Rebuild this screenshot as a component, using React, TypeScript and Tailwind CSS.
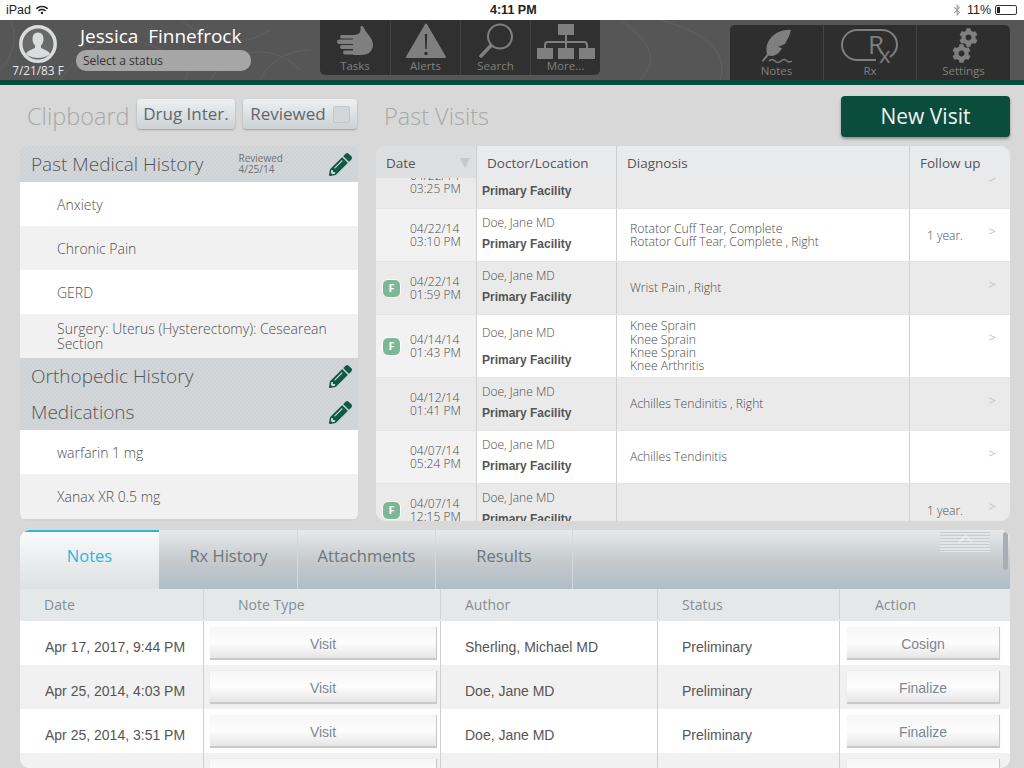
import { FaBluetoothB, FaCog, FaPencilAlt, FaWifi } from "react-icons/fa";
import { ReactNode } from "react";

const ui = "font-['Open_Sans',sans-serif]";
const arial = "font-['Liberation_Sans',Arial,sans-serif]";
const hatch =
  "bg-[repeating-linear-gradient(135deg,#d4d8db_0px,#d4d8db_1.414px,#cdd1d4_1.414px,#cdd1d4_2.828px)]";

interface Visit {
  date: string;
  time: string;
  tall?: boolean;
  flag?: boolean;
  diagnosis: string[];
  followUp?: string;
}

const visits: Visit[] = [
  { date: "04/22/14", time: "03:25 PM", diagnosis: [] },
  {
    date: "04/22/14",
    time: "03:10 PM",
    diagnosis: ["Rotator Cuff Tear, Complete", "Rotator Cuff Tear, Complete , Right"],
    followUp: "1 year.",
  },
  { date: "04/22/14", time: "01:59 PM", flag: true, diagnosis: ["Wrist Pain , Right"] },
  {
    date: "04/14/14",
    time: "01:43 PM",
    flag: true,
    tall: true,
    diagnosis: ["Knee Sprain", "Knee Sprain", "Knee Sprain", "Knee Arthritis"],
  },
  { date: "04/12/14", time: "01:41 PM", diagnosis: ["Achilles Tendinitis , Right"] },
  { date: "04/07/14", time: "05:24 PM", diagnosis: ["Achilles Tendinitis"] },
  { date: "04/07/14", time: "12:15 PM", flag: true, diagnosis: [], followUp: "1 year." },
];

const notes = [
  { date: "Apr 17, 2017, 9:44 PM", author: "Sherling, Michael MD", action: "Cosign" },
  { date: "Apr 25, 2014, 4:03 PM", author: "Doe, Jane MD", action: "Finalize" },
  { date: "Apr 25, 2014, 3:51 PM", author: "Doe, Jane MD", action: "Finalize" },
  { date: "", author: "", action: "" },
];

function HandIcon() {
  return (
    <svg width="36" height="29" viewBox="0 0 36 29" fill="#7f7f7f">
      <rect x="3" y="9" width="20" height="3.6" rx="1.8" />
      <rect x="0" y="13.4" width="22" height="4.6" rx="2.3" />
      <rect x="3" y="19" width="20" height="4" rx="2" />
      <rect x="6" y="24.4" width="20" height="4" rx="2" />
      <path d="M16 9c4 0 6-1 7-3 1-2 0-5 1-6 2-1 3 2 4 4 2 4 8 8 8 15 0 6-5 10-11 10h-9z" />
    </svg>
  );
}

function AlertIcon() {
  return (
    <svg width="40" height="35" viewBox="0 0 40 35">
      <path d="M20 1.5L39 34H1z" fill="#7f7f7f" stroke="#7f7f7f" strokeWidth="2" strokeLinejoin="round" />
      <path d="M18.8 11h2.4l-.5 15h-1.4z" fill="#303030" />
      <circle cx="20" cy="30.5" r="1.8" fill="#303030" />
    </svg>
  );
}

function SearchIcon() {
  return (
    <svg width="34" height="35" viewBox="0 0 34 35" fill="none" stroke="#7f7f7f">
      <circle cx="21" cy="13.5" r="12" strokeWidth="2" />
      <path d="M11.5 23L2 33" strokeWidth="3.5" strokeLinecap="round" />
    </svg>
  );
}

function OrgIcon() {
  return (
    <svg width="58" height="35" viewBox="0 0 58 35" className="translate-y-[1px]">
      <g fill="#7f7f7f">
        <rect x="21" y="0" width="16" height="11" />
        <rect x="0" y="24" width="16" height="11" />
        <rect x="21" y="24" width="16" height="11" />
        <rect x="42" y="24" width="16" height="11" />
      </g>
      <path d="M29 11v13M8 24v-3a3 3 0 0 1 3-3h36a3 3 0 0 1 3 3v3" fill="none" stroke="#7f7f7f" strokeWidth="2" />
    </svg>
  );
}

function QuillIcon() {
  return (
    <svg width="32" height="34" viewBox="0 0 32 34">
      <path
        d="M30 1C24 0 14 3 9 10 5 15 5 21 6 25L1 31.5 2 33l5.5-6.5c5 1.500 10.500-1 13.500-7.500l-4-1 7-3c2-4 5-9 6-14z"
        fill="#7f7f7f"
      />
      <path d="M8 32c2-2 4-2 6 0s4 2 6 0 4-2 6 0 3 1 5 0" fill="none" stroke="#7f7f7f" strokeWidth="1.3" />
    </svg>
  );
}

function RxIcon() {
  return (
    <svg width="58" height="34" viewBox="0 0 58 34" fill="none" overflow="visible">
      <path
        d="M35 31H16a15 15 0 0 1 0-30h25c9 0 15 7 15 15 0 5-3 9-7 12"
        stroke="#7f7f7f"
        strokeWidth="2"
      />
      <text x="27" y="25" fontSize="26" fill="#7f7f7f" fontFamily="Open Sans, sans-serif">
        R
      </text>
      <text x="38" y="34" fontSize="22" fill="#7f7f7f" fontFamily="Open Sans, sans-serif">
        x
      </text>
    </svg>
  );
}

function Avatar() {
  return (
    <svg width="38" height="38" viewBox="0 0 38 38">
      <circle cx="19" cy="19" r="17.2" fill="#696969" stroke="#d8dcdd" strokeWidth="3.5" />
      <path
        d="M19 7.500c3.500 0 5.500 2.800 5.500 6.500 0 2.700-1 5-2.500 6.500v2.500c3 1.500 7.500 2.500 9 6-3 2.500-7.500 4-12 4s-9-1.500-12-4c1.500-3.500 6-4.500 9-6v-2.500c-1.500-1.500-2.500-3.800-2.500-6.500 0-3.700 2-6.500 5.500-6.500z"
        fill="#d8dcdd"
      />
    </svg>
  );
}

function NavCell({ label, width, children, last }: { label: string; width: string; children: ReactNode; last?: boolean }) {
  return (
    <div className={`${width} flex flex-col items-center justify-end pb-[2px] ${last ? "" : "border-r border-[#444]"}`}>
      <div className="flex-1 flex items-center justify-center pt-[2px]">{children}</div>
      <span className={`${ui} text-[11.5px] leading-[14px] text-[#808080]`}>{label}</span>
    </div>
  );
}

function Header() {
  return (
    <div className="relative h-[65px] bg-[#565656] border-b-[5px] border-[#064c39] flex overflow-hidden">
      <svg className="absolute inset-0 pointer-events-none" width="1024" height="60" fill="none" stroke="#626262" strokeWidth="1">
        <path d="M60 60C80 30 110 10 150 25s50 40 20 35" />
        <path d="M180 0c30 20 60 30 90 10M210 60c20-30 60-40 90-10" />
        <path d="M620 0c30 20 40 40 20 60M660 0c40 10 70 30 60 60" />
        <path d="M10 0c10 20 0 40-10 50M260 60c10-20 30-30 50-30" />
      </svg>
      <div className="relative w-[320px] shrink-0 flex">
        <div className="w-[76px] shrink-0 flex flex-col items-center pt-[5px]">
          <Avatar />
          <span className={`${ui} text-[11.8px] leading-[14px] text-[#e8e8e8] whitespace-nowrap`}>7/21/83 F</span>
        </div>
        <div className="flex flex-col pt-[4px]">
          <span className={`${ui} text-[19px] leading-[24px] pl-[4px] text-white whitespace-nowrap`}>Jessica&nbsp; Finnefrock</span>
          <div className="mt-[2px] w-[175px] h-[21px] rounded-[10px] bg-[#a6a6a6] pl-[7px] flex items-center">
            <span className={`${ui} text-[12px] text-[#333]`}>Select a status</span>
          </div>
        </div>
      </div>
      <div className="relative h-[55px] w-[280px] flex rounded-b-[5px] bg-[#303030]">
        <NavCell label="Tasks" width="w-[71px]"><HandIcon /></NavCell>
        <NavCell label="Alerts" width="w-[70px]"><AlertIcon /></NavCell>
        <NavCell label="Search" width="w-[70px]"><SearchIcon /></NavCell>
        <NavCell label="More..." width="w-[69px]" last><OrgIcon /></NavCell>
      </div>
      <div className="relative mt-[5px] ml-[130px] h-[55px] w-[280px] flex rounded-t-[5px] bg-[#2e2e2e]">
        <NavCell label="Notes" width="w-[94px]"><QuillIcon /></NavCell>
        <NavCell label="Rx" width="w-[93px]"><RxIcon /></NavCell>
        <NavCell label="Settings" width="w-[93px]" last>
          <div className="flex flex-col items-center -space-y-[3px] translate-x-[1px]">
            <FaCog className="text-[#7f7f7f] translate-x-[4px]" size={19} />
            <FaCog className="text-[#7f7f7f] -translate-x-[3px]" size={19} />
          </div>
        </NavCell>
      </div>
    </div>
  );
}

function StatusBar() {
  return (
    <div className={`${arial} relative h-[20px] bg-white flex items-center justify-between px-[6px] text-[12.5px] text-[#222]`}>
      <div className="flex items-center gap-[5px]">
        <span>iPad</span>
        <FaWifi size={12} />
      </div>
      <span className="font-bold absolute left-[490px]">4:11 PM</span>
      <div className="flex items-center gap-[4px]">
        <FaBluetoothB size={12} className="text-[#999]" />
        <span>11%</span>
        <div className="w-[22px] h-[10px] border border-[#333] rounded-[2px] p-[1px] flex mr-px">
          <div className="w-[3px] bg-[#222]" />
        </div>
      </div>
    </div>
  );
}

function SectionHead({ title, reviewed }: { title: string; reviewed?: boolean }) {
  return (
    <div className={`${hatch} h-[36px] flex items-center pl-[11px] pr-[6px]`}>
      <span className={`${ui} font-light text-[19px] text-[#555] whitespace-nowrap`}>{title}</span>
      {reviewed && (
        <div className={`${ui} ml-[35px] text-[10px] leading-[11px] text-[#707070]`}>
          Reviewed
          <br />
          4/25/14
        </div>
      )}
      <FaPencilAlt className="ml-auto text-[#0d5a45]" size={23} />
    </div>
  );
}

function HistoryRow({ children, odd }: { children: ReactNode; odd?: boolean }) {
  return (
    <div className={`${odd ? "bg-[#f1f1f1]" : "bg-white"} ${ui} font-light h-[44px] pl-[37px] pr-[20px] flex items-center text-[14px] leading-[15px] text-[#4f4f4f]`}>
      <div>{children}</div>
    </div>
  );
}

function Clipboard() {
  return (
    <div className="w-[338px] h-[375px] rounded-[8px] overflow-hidden shrink-0">
      <SectionHead title="Past Medical History" reviewed />
      <HistoryRow>Anxiety</HistoryRow>
      <HistoryRow odd>Chronic Pain</HistoryRow>
      <HistoryRow>GERD</HistoryRow>
      <HistoryRow odd>Surgery: Uterus (Hysterectomy): Cesearean Section</HistoryRow>
      <SectionHead title="Orthopedic History" />
      <SectionHead title="Medications" />
      <HistoryRow>warfarin 1 mg</HistoryRow>
      <HistoryRow odd>Xanax XR 0.5 mg</HistoryRow>
      <div className="h-[1px] bg-[#f1f1f1]" />
      <div className={`${hatch} h-[2px]`} />
    </div>
  );
}

function VisitRow({ visit, index }: { visit: Visit; index: number }) {
  const gray = index % 2 === 0;
  const cell = gray ? "bg-[#eaeaea]" : "bg-white";
  return (
    <div className={`grid grid-cols-[101px_140px_293px_100px] ${visit.tall ? "h-[63px]" : "h-[53px]"} border-b border-[#e4e4e4] text-[#4a4a4a]`}>
      <div className={`${gray ? "bg-[#eaeaea]" : "bg-[#f2f2f2]"} border-r border-[#cfcfcf] flex items-center`}>
        <div className="w-[19px] ml-[6px] mr-[9px] shrink-0">
          {visit.flag && (
            <div className={`${ui} w-[19px] h-[19px] rounded-[6px] border-[1.5px] border-white bg-[#7cb898] text-white text-[11px] font-bold flex items-center justify-center`}>
              F
            </div>
          )}
        </div>
        <div className={`${ui} font-light text-[12px] leading-[13.5px] whitespace-nowrap`}>
          {visit.date}
          <br />
          {visit.time}
        </div>
      </div>
      <div className={`${cell} border-r border-[#cfcfcf] pl-[5px] flex flex-col ${visit.tall ? "pt-[11px] gap-[13px]" : "pt-[7px] gap-[7px]"}`}>
        <span className={`${ui} font-light text-[12px] leading-[14px]`}>Doe, Jane MD</span>
        <span className={`${arial} font-bold text-[12px] leading-[14px] text-[#555]`}>Primary Facility</span>
      </div>
      <div className={`${cell} ${ui} border-r border-[#cfcfcf] pl-[13px] flex flex-col justify-center text-[12.2px] leading-[13.3px] font-light`}>
        {visit.diagnosis.map((d, i) => (
          <span key={i}>{d}</span>
        ))}
      </div>
      <div className={`${cell} ${ui} flex justify-between pl-[17px] pr-[14px] font-light`}>
        <span className="text-[12px] leading-[14px] mt-[20px]">{visit.followUp}</span>
        <span className="text-[13px] leading-[12px] mt-[16px] text-[#c4c4c4] font-normal">&gt;</span>
      </div>
    </div>
  );
}

function PastVisits() {
  return (
    <div className="w-[634px] h-[375px] rounded-[10px] overflow-hidden bg-[#eaeaea] flex flex-col shrink-0">
      <div className={`${ui} grid grid-cols-[101px_140px_293px_100px] h-[32px] shrink-0 text-[13.5px] text-[#555]`}>
        <div className="bg-[#dcdee0] pl-[10px] pt-[2px] flex items-center justify-between pr-[7px]">
          Date
          <span className="w-0 h-0 border-x-[5px] border-x-transparent border-t-[10px] border-t-[#c6c8ca]" />
        </div>
        <div className="bg-[#e9eaeb] border-r border-l border-[#cfcfcf] -ml-px pl-[10px] pt-[2px] flex items-center">Doctor/Location</div>
        <div className="bg-[#e9eaeb] border-r border-[#cfcfcf] pl-[10px] pt-[2px] flex items-center">Diagnosis</div>
        <div className="bg-[#e9eaeb] pl-[10px] pt-[2px] flex items-center">Follow up</div>
      </div>
      <div className="flex-1 overflow-hidden">
        <div className="-mt-[22px]">
          {visits.map((v, i) => (
            <VisitRow key={i} visit={v} index={i} />
          ))}
        </div>
      </div>
    </div>
  );
}

function Tab({ label, active, width }: { label: string; active?: boolean; width: string }) {
  return (
    <div
      className={`${width} ${ui} relative h-[59px] flex items-center justify-center text-[16.5px] pb-[6px] ${
        active
          ? "bg-gradient-to-b from-[#f9fbfc] to-[#dde1e2] text-[#2bb6df] font-medium mr-px"
          : "text-[#6e767c] border-r border-[#d3d8db]"
      }`}
    >
      {active && <span className="absolute left-[5px] right-0 top-0 h-[1.5px] bg-[#2bb6df]" />}
      {label}
    </div>
  );
}

function PanelButton({ label }: { label: string }) {
  return (
    <div className={`${arial} h-[33px] pt-[3px] bg-gradient-to-b from-[#f6f6f6] via-[#fdfdfd] to-[#e6e6e6] border-b-2 border-r border-[#c9c9c9] shadow-[0_0_1px_rgba(0,0,0,0.1)] flex items-center justify-center text-[14px] text-[#7a8892]`}>
      {label}
    </div>
  );
}

function NotesPanel() {
  const col = "grid grid-cols-[184px_237px_217px_182px_170px]";
  const rowText = `${arial} text-[14px] text-[#555] flex items-center pt-[9px] border-r border-[#cfcfcf] whitespace-nowrap`;
  return (
    <div className="mt-[9px] ml-[20px] w-[990px] h-[238px] rounded-[10px] overflow-hidden bg-white">
      <div className="relative flex h-[59px] bg-gradient-to-b from-[#e7eaec] via-[#c6cbce] to-[#b0bcc6]">
        <Tab label="Notes" active width="w-[139px]" />
        <Tab label="Rx History" width="w-[138px]" />
        <Tab label="Attachments" width="w-[138px]" />
        <Tab label="Results" width="w-[137px]" />
        <div className="absolute left-[920px] top-[2px] w-[50px] h-[20px] bg-[repeating-linear-gradient(180deg,#c5cbcf_0px,#c5cbcf_1px,#e2e6e8_1px,#e2e6e8_3px)] flex justify-center">
          <span className="mt-[5px] w-[9px] h-[9px] rotate-45 border-l border-t border-[#f2f4f5]" />
        </div>
        <div className="absolute right-[2px] top-[2px] w-[5px] h-[38px] rounded-full bg-[#a7afb5]" />
      </div>
      <div className={`${col} ${ui} h-[32px] pb-[2px] bg-[#e5e8e9] text-[14px] text-[#868e94]`}>
        <div className="pl-[24px] flex items-center border-r border-[#cfd3d5]">Date</div>
        <div className="pl-[34px] flex items-center border-r border-[#cfd3d5]">Note Type</div>
        <div className="pl-[24px] flex items-center border-r border-[#cfd3d5]">Author</div>
        <div className="pl-[24px] flex items-center border-r border-[#cfd3d5]">Status</div>
        <div className="pl-[35px] flex items-center">Action</div>
      </div>
      {notes.map((n, i) => (
        <div key={i} className={`${col} h-[44px] ${i % 2 ? "bg-[#f1f1f1]" : "bg-white"}`}>
          <div className={`${rowText} pl-[25px]`}>{n.date}</div>
          <div className="border-r border-[#cfcfcf] pl-[6px] pr-[3px] pt-[6px]">
            <PanelButton label={n.date ? "Visit" : ""} />
          </div>
          <div className={`${rowText} pl-[24px]`}>{n.author}</div>
          <div className={`${rowText} pl-[24px]`}>{n.date ? "Preliminary" : ""}</div>
          <div className="pl-[7px] pr-[10px] pt-[6px]">
            <PanelButton label={n.action} />
          </div>
        </div>
      ))}
    </div>
  );
}

function SmallButton({ children, width }: { children: ReactNode; width: string }) {
  return (
    <div className={`${width} ${ui} h-[30px] rounded-[4px] bg-gradient-to-b from-[#eef0f1] to-[#ccd2d5] shadow-[0_1px_2px_rgba(0,0,0,0.3)] flex items-center justify-center text-[17px] text-[#5f676c]`}>
      {children}
    </div>
  );
}

export default function App() {
  return (
    <div className="w-[1024px] h-[768px] overflow-hidden bg-[#d8d8d8]">
      <StatusBar />
      <Header />
      <div className="h-[61px] flex items-start">
        <span className={`${ui} font-light ml-[27px] mt-[15px] w-[110px] text-[23.5px] leading-[32px] text-[#a8a8a8] whitespace-nowrap`}>Clipboard</span>
        <div className="mt-[14px] flex gap-[8px]">
          <SmallButton width="w-[98px]">Drug Inter.</SmallButton>
          <SmallButton width="w-[114px]">
            Reviewed
            <span className="ml-[7px] w-[17px] h-[17px] rounded-[2px] border border-[#c2c7ca] bg-[#d4d7d9]" />
          </SmallButton>
        </div>
        <span className={`${ui} font-light ml-[27px] mt-[15px] text-[23.5px] leading-[32px] text-[#a8a8a8]`}>Past Visits</span>
        <div className={`${ui} ml-auto mr-[14px] mt-[11px] w-[169px] h-[41px] rounded-[4px] bg-[#0b4d3c] shadow-[0_2px_3px_rgba(0,0,0,0.35)] flex items-center justify-center text-[21px] text-[#f2f2f2]`}>
          New Visit
        </div>
      </div>
      <div className="flex items-start pl-[20px] gap-[18px]">
        <Clipboard />
        <PastVisits />
      </div>
      <NotesPanel />
    </div>
  );
}
